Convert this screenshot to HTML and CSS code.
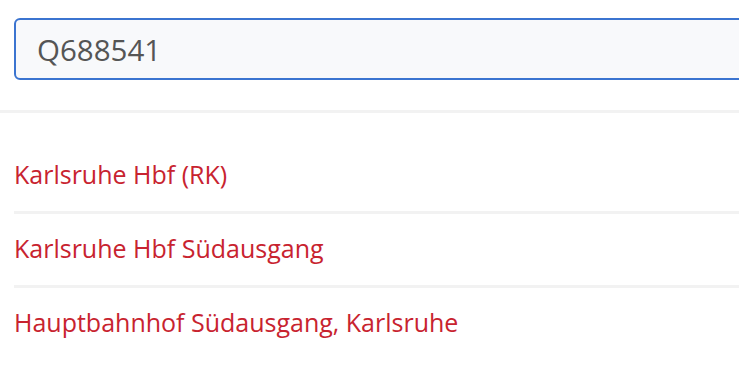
FILE: index.html
```html
<!DOCTYPE html>
<html lang="de">
<head>
    <meta charset="UTF-8">
    <meta name="viewport" content="width=device-width, initial-scale=1.0">
    <title>Haltestellensuche</title>
    <link rel="stylesheet" href="styles.css">
</head>
<body>
    <div class="suche">
        <input type="text" class="suche-feld" value="Q688541">
    </div>

    <ul class="ergebnisse">
        <li><a href="#">Karlsruhe Hbf (RK)</a></li>
        <li><a href="#">Karlsruhe Hbf Südausgang</a></li>
        <li><a href="#">Hauptbahnhof Südausgang, Karlsruhe</a></li>
    </ul>
</body>
</html>
```

FILE: styles.css
```css
:root {
    --primary-color: #3b74d0;
    --link-color: #c8232f;
    --border-color: #f2f2f2;
    --input-bg: #f8f9fb;
}

* {
    margin: 0;
    padding: 0;
    box-sizing: border-box;
}

html, body {
    overflow: hidden;
}

body {
    font-family: "Open Sans", sans-serif;
    background-color: white;
}

.suche {
    padding: 18px 0 30px 14px;
    border-bottom: 3px solid var(--border-color);
}

.suche-feld {
    display: block;
    width: calc(100% + 20px);
    height: 62px;
    padding: 0 21px;
    font-family: "Open Sans", sans-serif;
    font-size: 29.5px;
    color: #555;
    background-color: var(--input-bg);
    border: 2px solid var(--primary-color);
    border-radius: 6px;
    outline: none;
}

.ergebnisse {
    list-style: none;
    padding-left: 14px;
    margin-top: 27px;
}

.ergebnisse li {
    border-bottom: 3px solid var(--border-color);
}

.ergebnisse li:last-child {
    border-bottom: none;
}

.ergebnisse a {
    display: block;
    padding: 15px 0 18px;
    font-size: 25px;
    line-height: 38px;
    color: var(--link-color);
    text-decoration: none;
}
```
